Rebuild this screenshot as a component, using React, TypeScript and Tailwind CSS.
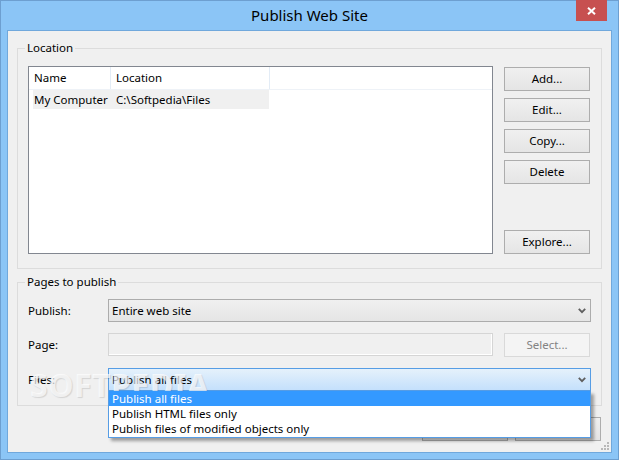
import { ReactNode } from 'react';

function Chevron() {
  return (
    <svg width="8" height="6" viewBox="0 0 8 6" className="shrink-0">
      <path d="M0.8 0.8 L4 4.2 L7.2 0.8" fill="none" stroke="#5f5f5f" strokeWidth="1.8" />
    </svg>
  );
}

function Button({ children, disabled }: { children: ReactNode; disabled?: boolean }) {
  return (
    <div
      className={`flex h-[24px] w-[86px] items-center justify-center border text-[11.5px] ${
        disabled
          ? 'border-[#d9d9d9] bg-[#f4f4f4] text-[#838383]'
          : 'border-[#adadad] bg-gradient-to-b from-[#f0f0f0] to-[#e5e5e5] text-black'
      }`}
    >
      {children}
    </div>
  );
}

function Group({ title, children, className }: { title: string; children: ReactNode; className: string }) {
  return (
    <fieldset className={`border border-[#dcdcdc] ${className}`}>
      <legend className="-ml-[3px] px-[2px] text-[11.5px] leading-[16px]">{title}</legend>
      {children}
    </fieldset>
  );
}

export default function App() {
  return (
    <div className="flex h-[460px] w-[619px] flex-col border border-[#6d9fd0] bg-[#8bc5f6] px-[6px] pb-[6px] font-['Noto_Sans',sans-serif] text-black">
      {/* title bar */}
      <div className="relative flex h-[29px] shrink-0 items-center justify-center">
        <span className="-mt-[1px] text-[15px]">Publish Web Site</span>
        <div className="absolute -top-px right-[5px] flex h-[21px] w-[31px] items-center justify-center bg-[#c75050]">
          <svg width="9" height="8" viewBox="0 0 9 8">
            <path d="M1 0.8 L8 7.2 M8 0.8 L1 7.2" stroke="#fff" strokeWidth="2" />
          </svg>
        </div>
      </div>

      {/* client */}
      <div className="relative flex flex-1 flex-col border border-[#70a8dc] bg-[#f0f0f0] px-[9px] pt-[9px]">
        <Group title="Location" className="px-[10px] pt-[10px] pb-[14px]">
          <div className="flex gap-[11px]">
            <div className="h-[188px] w-[465px] border border-[#828790] bg-white">
              <div className="flex h-[23px] border-b border-[#eef2f7] text-[11.5px]">
                <div className="flex w-[82px] items-center border-r border-[#e3ecf6] pl-[5px]">Name</div>
                <div className="flex w-[159px] items-center border-r border-[#e3ecf6] pl-[5px]">Location</div>
              </div>
              <div className="ml-[4px] flex h-[19px] w-[236px] items-center bg-[#f0f0f0] text-[11.5px]">
                <div className="w-[78px] pl-[1px] whitespace-nowrap">My Computer</div>
                <div className="pl-[5px]">C:\Softpedia\Files</div>
              </div>
            </div>
            <div className="flex flex-col gap-[7px] pt-px">
              <Button>Add...</Button>
              <Button>Edit...</Button>
              <Button>Copy...</Button>
              <Button>Delete</Button>
              <div className="mt-auto">
                <Button>Explore...</Button>
              </div>
            </div>
          </div>
        </Group>

        <Group title="Pages to publish" className="relative z-10 mt-[5px] pt-[9px] pr-[9px] pb-[14px] pl-[10px]">
          <div className="flex h-[23px] items-center text-[11.5px]">
            <span className="w-[80px]">Publish:</span>
            <div className="flex h-[23px] w-[483px] items-center justify-between border border-[#acacac] bg-gradient-to-b from-[#f0f0f0] to-[#e5e5e5] pr-[4px] pl-[3px]">
              <span>Entire web site</span>
              <Chevron />
            </div>
          </div>
          <div className="mt-[11px] flex h-[23px] items-center text-[11.5px]">
            <span className="w-[80px]">Page:</span>
            <div className="h-[23px] w-[385px] border border-[#d5d5d5] bg-[#f0f0f0] shadow-[inset_-1px_-1px_0_#ffffff]" />
            <div className="ml-[11px]">
              <Button disabled>Select...</Button>
            </div>
          </div>
          <div className="mt-[12px] flex h-[23px] items-center text-[11.5px]">
            <span className="w-[80px]">Files:</span>
            <div className="relative w-[483px]">
              <div className="flex h-[23px] items-center justify-between border border-[#569de5] bg-gradient-to-b from-[#e5f1fb] to-[#c4e0fc] pr-[4px] pl-[3px]">
                <span>Publish all files</span>
                <Chevron />
              </div>
              <div className="absolute top-full left-0 z-20 w-[483px] border-x border-b border-[#569de5] bg-white pb-px shadow-[3px_3px_3px_rgba(0,0,0,0.35)]">
                <div className="flex h-[15px] items-center bg-[#3399ff] pl-[3px] text-white">Publish all files</div>
                <div className="flex h-[15px] items-center pl-[3px]">Publish HTML files only</div>
                <div className="flex h-[15px] items-center pl-[3px]">Publish files of modified objects only</div>
              </div>
            </div>
          </div>
          <div className="pointer-events-none absolute top-[79px] left-[12px] text-[32px] leading-none font-bold tracking-[0.5px] text-white/70 [text-shadow:1px_1px_1px_rgba(0,0,0,0.12)]">
            SOFTPEDIA
          </div>
        </Group>

        <div className="mt-[11px] flex justify-end gap-[7px] pr-px">
          <Button>OK</Button>
          <Button>Cancel</Button>
        </div>

        <svg width="9" height="9" viewBox="0 0 9 9" className="absolute right-[1px] bottom-[1px]">
          <rect x="6" y="0" width="2" height="2" fill="#b8b8b8" />
          <rect x="3" y="3" width="2" height="2" fill="#b8b8b8" />
          <rect x="6" y="3" width="2" height="2" fill="#b8b8b8" />
          <rect x="0" y="6" width="2" height="2" fill="#b8b8b8" />
          <rect x="3" y="6" width="2" height="2" fill="#b8b8b8" />
          <rect x="6" y="6" width="2" height="2" fill="#b8b8b8" />
        </svg>
      </div>
    </div>
  );
}
